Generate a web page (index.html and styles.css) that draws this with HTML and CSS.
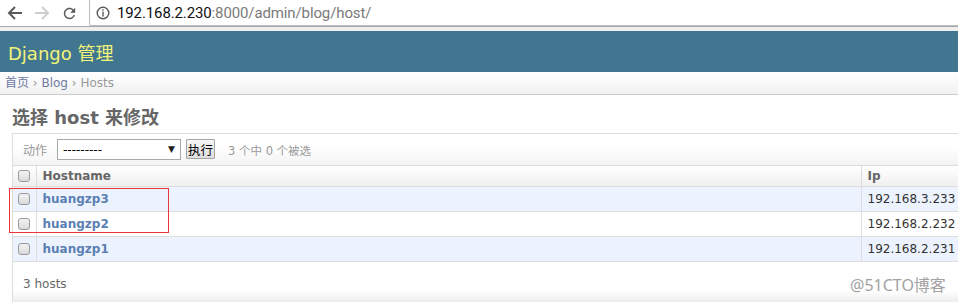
FILE: index.html
```html
<!DOCTYPE html>
<html lang="zh-CN">
<head>
  <meta charset="UTF-8">
  <title>选择 host 来修改 | Django 站点管理员</title>
  <link rel="stylesheet" href="styles.css">
</head>
<body>

  <div class="toolbar">
    <svg class="nav-icon" viewBox="0 0 16 16" width="16" height="16">
      <path d="M15 8H2M8 2L2 8l6 6" fill="none" stroke="#5a5a5a" stroke-width="2"/>
    </svg>
    <svg class="nav-icon" viewBox="0 0 16 16" width="16" height="16">
      <path d="M1 8h13M8 2l6 6-6 6" fill="none" stroke="#cfcfcf" stroke-width="2"/>
    </svg>
    <svg class="nav-icon" viewBox="0 0 24 24" width="17" height="17">
      <path fill="#5a5a5a" d="M17.65 6.35C16.2 4.9 14.21 4 12 4c-4.42 0-7.990 3.58-7.99 8s3.57 8 7.99 8c3.730 0 6.84-2.55 7.73-6h-2.08c-.82 2.33-3.04 4-5.65 4-3.31 0-6-2.69-6-6s2.69-6 6-6c1.66 0 3.14.69 4.22 1.78L13 11h7V4l-2.35 2.35z"/>
    </svg>
    <div class="address">
      <svg class="info-icon" viewBox="0 0 14 14" width="14" height="14">
        <circle cx="7" cy="7" r="5.8" fill="none" stroke="#5a5a5a" stroke-width="1.4"/>
        <rect x="6.3" y="3.2" width="1.4" height="1.5" fill="#5a5a5a"/>
        <rect x="6.3" y="5.6" width="1.4" height="5" fill="#5a5a5a"/>
      </svg>
      <span class="url-host">192.168.2.230</span><span class="url-rest">:8000/admin/blog/host/</span>
    </div>
  </div>
  <div class="toolbar-edge"></div>

  <div class="header">Django 管理</div>

  <div class="breadcrumbs">
    <a href="#">首页</a> &rsaquo; <a href="#">Blog</a> &rsaquo; Hosts
  </div>

  <div class="content">
    <h1>选择 host 来修改</h1>

    <div class="changelist">
      <div class="actions">
        <label class="action-label">动作</label>
        <span class="select-wrap">
          <select class="action-select">
            <option value="">---------</option>
            <option value="delete_selected">删除所选的 hosts</option>
          </select>
          <span class="select-arrow">&#9660;</span>
        </span>
        <button class="go-btn" type="submit">执行</button>
        <span class="action-counter">3 个中 0 个被选</span>
      </div>

      <table class="result-list">
        <colgroup>
          <col class="col-check">
          <col class="col-name">
          <col class="col-ip">
        </colgroup>
        <thead>
          <tr>
            <th class="check-cell"><input type="checkbox" class="box"></th>
            <th>Hostname</th>
            <th>Ip</th>
          </tr>
        </thead>
        <tbody>
          <tr class="row1">
            <td class="check-cell"><input type="checkbox" class="box"></td>
            <th><a href="#">huangzp3</a></th>
            <td>192.168.3.233</td>
          </tr>
          <tr class="row2">
            <td class="check-cell"><input type="checkbox" class="box"></td>
            <th><a href="#">huangzp2</a></th>
            <td>192.168.2.232</td>
          </tr>
          <tr class="row1">
            <td class="check-cell"><input type="checkbox" class="box"></td>
            <th><a href="#">huangzp1</a></th>
            <td>192.168.2.231</td>
          </tr>
        </tbody>
      </table>

      <p class="paginator">3 hosts</p>
    </div>
  </div>

  <div class="mark-box"></div>
  <div class="watermark">@51CTO博客</div>

</body>
</html>
```

FILE: styles.css
```css
html {
  overflow: hidden;
}

body {
  margin: 0;
  padding: 0;
  width: 958px;
  height: 302px;
  overflow: hidden;
  position: relative;
  font-family: "DejaVu Sans", "Noto Sans CJK SC", sans-serif;
  font-size: 12px;
  color: #333;
  background: #fff;
}

a {
  color: #5b80b2;
  text-decoration: none;
}

/* browser chrome */
.toolbar {
  height: 26px;
  display: flex;
  align-items: center;
  padding-left: 7px;
  background: #fff;
  border-bottom: 1px solid #a8a8a8;
}

.nav-icon {
  margin-right: 11px;
  flex: none;
}

.address {
  align-self: flex-start;
  box-sizing: border-box;
  height: 29px;
  margin-top: -3px;
  flex: 1;
  display: flex;
  align-items: center;
  padding: 3px 0 0 6px;
  border: 1px solid #bdbdbd;
  border-right: none;
  border-radius: 2px 0 0 2px;
  font-family: Roboto, "Noto Sans", sans-serif;
  font-size: 15px;
  letter-spacing: -0.12px;
}

.info-icon {
  margin-right: 7px;
}

.url-host {
  color: #111;
}

.url-rest {
  color: #7a7a7a;
}

.toolbar-edge {
  height: 4px;
  background: #efefef;
}

/* django admin */
.header {
  height: 41px;
  display: flex;
  align-items: center;
  padding: 0 8px;
  background: #417690;
  color: #f4f379;
  font-size: 18px;
}

.breadcrumbs {
  height: 21px;
  line-height: 21px;
  padding: 0 5px;
  border-top: 1px solid #fff;
  border-bottom: 1px solid #ccc;
  background: linear-gradient(#fff, #f1f1f1);
  color: #999;
  font-size: 12px;
}

.breadcrumbs a {
  color: #6f78a3;
}

.content {
  padding-left: 12px;
  overflow: hidden;
}

.content h1 {
  margin: 12px 0 4px;
  line-height: 22px;
  font-size: 18px;
  font-weight: bold;
  color: #666;
}

.changelist {
  width: 1100px;
  border-left: 1px solid #ddd;
  border-top: 1px solid #ddd;
}

.actions {
  height: 31px;
  display: flex;
  align-items: center;
  padding-left: 10px;
  border-bottom: 1px solid #ddd;
  background: linear-gradient(#fff 40%, #f3f3f3);
  color: #999;
}

.action-label {
  font-size: 12px;
  margin-right: 10px;
}

.select-wrap {
  position: relative;
  display: inline-block;
  margin-right: 5px;
}

.action-select {
  appearance: none;
  -webkit-appearance: none;
  box-sizing: border-box;
  width: 124px;
  height: 21px;
  margin: 0;
  padding: 0 0 0 5px;
  border: 1px solid #a9a9a9;
  border-radius: 0;
  background: #fff;
  font-family: "DejaVu Sans", sans-serif;
  font-size: 12px;
  color: #000;
}

.select-arrow {
  position: absolute;
  right: 6px;
  top: 5px;
  font-size: 9px;
  color: #222;
  pointer-events: none;
}

.go-btn {
  box-sizing: border-box;
  height: 20px;
  width: 29px;
  margin: -1px 13px 0 0;
  padding: 0;
  border: 1px solid #a5a5a5;
  border-radius: 1px;
  background: linear-gradient(#f6f6f6, #dedede);
  font-family: "Noto Sans CJK SC", sans-serif;
  font-size: 12.5px;
  color: #000;
}

.action-counter {
  font-size: 11.5px;
  color: #999;
}

.result-list {
  border-collapse: collapse;
  table-layout: fixed;
  width: 1100px;
}

.col-check {
  width: 23px;
}

.col-name {
  width: 825px;
}

.result-list th,
.result-list td {
  padding: 0 6px;
  text-align: left;
  vertical-align: middle;
  border-bottom: 1px solid #ddd;
  border-left: 1px solid #ddd;
  white-space: nowrap;
}

.result-list .check-cell {
  padding: 0;
  border-left: none;
  text-align: center;
}

.result-list thead th {
  height: 20px;
  color: #666;
  font-weight: bold;
  font-size: 12px;
  background: linear-gradient(#fff, #efefef);
}

.result-list tbody th,
.result-list tbody td {
  height: 24px;
}

.result-list tbody th {
  font-weight: bold;
}

.result-list tbody td {
  color: #333;
}

.row1 {
  background: #edf3fe;
}

.row2 {
  background: #fff;
}

.box {
  appearance: none;
  -webkit-appearance: none;
  display: block;
  width: 12px;
  height: 12px;
  margin: 0 auto;
  border: 1px solid #9a9a9a;
  border-radius: 3px;
  background: linear-gradient(#f4f4f4, #d9d9d9);
}

.paginator {
  margin: 0;
  height: 28px;
  padding: 12px 10px 0;
  line-height: 20px;
  color: #666;
  background: linear-gradient(#fff 70%, #ededed);
}

/* overlays drawn on the screenshot */
.mark-box {
  position: absolute;
  left: 9px;
  top: 188px;
  width: 158px;
  height: 43px;
  border: 1px solid #e9353b;
}

.watermark {
  position: absolute;
  left: 850px;
  top: 272px;
  font-family: "Noto Sans", "Noto Sans CJK SC", sans-serif;
  font-size: 16px;
  color: #a2a2a2;
}
```
